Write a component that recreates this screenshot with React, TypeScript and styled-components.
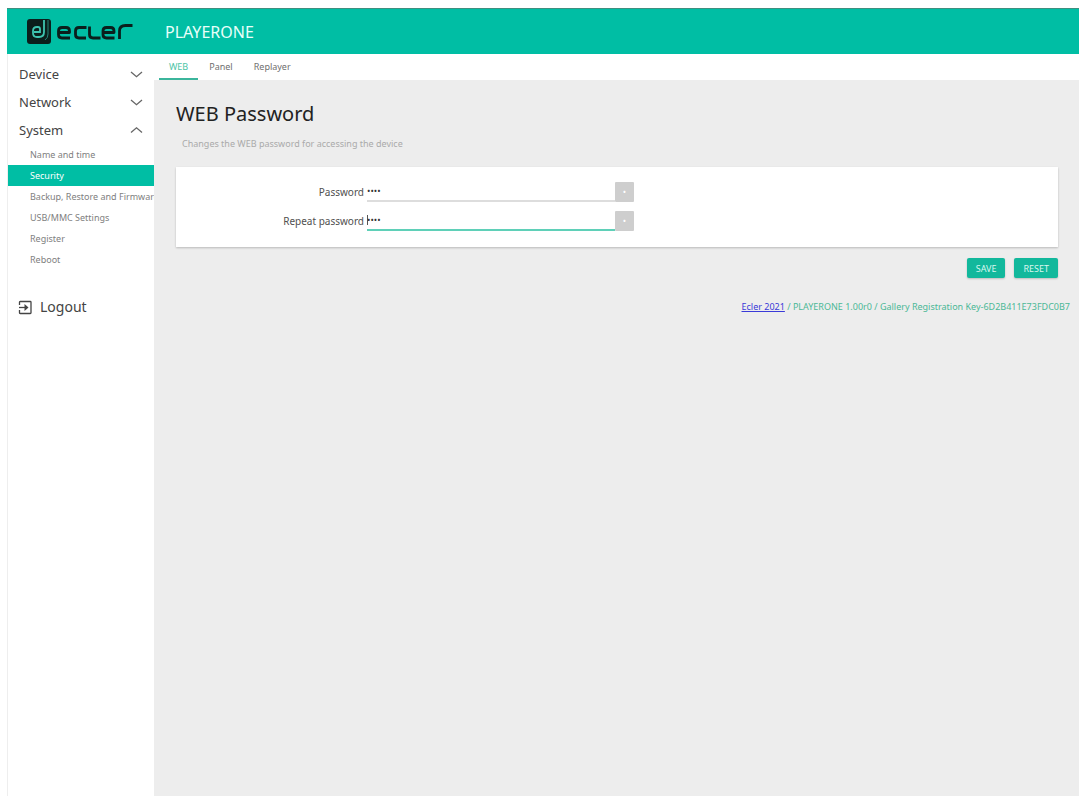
import React, { useState } from "react";
import styled, { createGlobalStyle } from "styled-components";

const teal = "#00bea4";
const ink = "#0b1f1c";

const GlobalStyle = createGlobalStyle`
  * { box-sizing: border-box; }
  body { margin: 0; background: #fff; font-family: "Noto Sans", "Open Sans", sans-serif; color: #333; }
  button, input { font-family: inherit; }
`;

const Page = styled.div`
  display: flex;
  flex-direction: column;
  min-height: 100vh;
  padding: 8px 2px 0 7px;
`;

const Header = styled.header`
  display: flex;
  align-items: center;
  height: 46px;
  padding-left: 20px;
  background: ${teal};
  border-top: 1px solid #3f8f80;
`;

const LogoLink = styled.a`
  display: flex;
  width: 138px;
`;

const Product = styled.span`
  color: #e8fffa;
  font-size: 16px;
  line-height: 24px;
`;

const Body = styled.div`
  display: flex;
  flex: 1;
`;

const Sidebar = styled.nav`
  display: flex;
  flex-direction: column;
  flex: none;
  width: 147px;
  padding-top: 6px;
  border-left: 1px solid #eee;
  overflow: hidden;
`;

const GroupButton = styled.button`
  display: flex;
  align-items: center;
  justify-content: space-between;
  height: 28px;
  padding: 0 11px;
  border: 0;
  background: none;
  color: #444;
  font-size: 13px;
  line-height: 20px;
`;

const SubList = styled.ul`
  margin: 0;
  padding: 0;
  list-style: none;
`;

const SubLink = styled.a<{ $active?: boolean }>`
  display: block;
  padding-left: 22px;
  background: ${(p) => (p.$active ? teal : "transparent")};
  color: ${(p) => (p.$active ? "#fff" : "#808080")};
  font-size: 9px;
  line-height: 21px;
  white-space: nowrap;
  text-decoration: none;
`;

const Logout = styled.a`
  display: flex;
  align-items: center;
  gap: 7px;
  margin-top: 27px;
  padding-left: 10px;
  color: #444;
  font-size: 14px;
  line-height: 20px;
  text-decoration: none;
`;

const Main = styled.main`
  flex: 1;
  min-width: 0;
  background: #ededed;
`;

const Tabs = styled.div`
  display: flex;
  gap: 1px;
  height: 26px;
  padding-left: 5px;
  background: #fff;
`;

const Tab = styled.button<{ $active?: boolean }>`
  padding: 2px 10px 0;
  border: 0;
  border-bottom: 2px solid ${(p) => (p.$active ? "#3bb59c" : "transparent")};
  background: none;
  color: ${(p) => (p.$active ? "#4cc4a6" : "#707070")};
  font-size: 9px;
  line-height: 20px;
`;

const Content = styled.div`
  padding: 18px 21px 0 22px;
`;

const Title = styled.h1`
  margin: 0;
  color: #222;
  font-size: 20px;
  font-weight: 400;
  line-height: 32px;
`;

const Hint = styled.p`
  margin: 0;
  padding: 4px 6px 13px;
  color: #aaa;
  font-size: 9px;
  line-height: 20px;
`;

const Card = styled.section`
  display: flex;
  flex-direction: column;
  gap: 8px;
  padding: 14px 0 16px;
  background: #fff;
  box-shadow: 0 1px 2px rgba(0, 0, 0, 0.22);
`;

const Field = styled.div`
  display: flex;
  align-items: center;
  height: 21px;
`;

const Label = styled.label`
  width: 188px;
  color: #505050;
  font-size: 10px;
  text-align: right;
`;

const Input = styled.input<{ $focused?: boolean }>`
  width: 248px;
  height: 21px;
  margin-left: 3px;
  padding: 0;
  border: 0;
  border-bottom: 2px solid ${(p) => (p.$focused ? "#5fd0b8" : "#ddd")};
  outline: 0;
  background: ${(p) => (p.$focused ? "linear-gradient(#555, #555) 0 5px / 1px 10px no-repeat" : "none")};
  color: #333;
  font-size: 9px;
`;

const Reveal = styled.button`
  width: 19px;
  height: 20px;
  padding: 0;
  border: 0;
  border-radius: 1px;
  background: #cecece;
  color: #fff;
  font-size: 9px;
  line-height: 20px;
`;

const Actions = styled.div`
  display: flex;
  justify-content: flex-end;
  gap: 9px;
  padding-top: 11px;
`;

const Action = styled.button`
  height: 20px;
  padding: 0 9px;
  border: 0;
  border-radius: 2px;
  background: #12b89c;
  box-shadow: 0 1px 2px rgba(0, 0, 0, 0.2);
  color: #d8f7ef;
  font-size: 9px;
`;

const Footer = styled.footer`
  padding: 20px 9px 0 0;
  color: #4bb896;
  font-size: 9px;
  line-height: 18px;
  text-align: right;

  a { color: #3a3ad8; }
`;

const Logo = () => (
  <svg width="107" height="25" viewBox="0 0 107 25" fill="none" stroke={ink} role="img" aria-label="ecler">
    <rect x="0" y="0" width="24" height="25" rx="3" fill={ink} stroke="none" />
    <path d="M7 13H13V10Q13 8 11 8H10Q6 8 6 12V14Q6 18 10 18H12Q17 18 17 13V1" stroke="#3ec4b0" strokeWidth="1.800" />
    <path d="M21 1V15Q21 19 18 21" stroke="#2a9d8c" strokeWidth="0.800" />
    <g strokeWidth="2.800" strokeLinejoin="round">
      <path d="M32 13.500H42.500V12Q42.500 8.500 39 8.500H35Q31.500 8.500 31.500 12V15.500Q31.500 19 35 19H43" />
      <path d="M59.500 8.500H52Q48.500 8.500 48.500 12V15.500Q48.500 19 52 19H59" />
      <path d="M62.500 7.500V15.500Q62.500 19 66 19H73.500" />
      <path d="M76.500 13.500H87V12Q87 8.500 83.500 8.500H79.500Q76 8.500 76 12V15.500Q76 19 79.500 19H87.500" />
      <path d="M92.500 20V12Q92.500 6.500 98.500 6.500H105.500" />
    </g>
  </svg>
);

const Chevron = ({ up }: { up?: boolean }) => (
  <svg width="13" height="8" viewBox="0 0 13 8" fill="none" stroke="#666" strokeWidth="1.300" aria-hidden="true">
    <path d={up ? "M1 6.500L6.500 1.800L12 6.500" : "M1 2L6.500 6.700L12 2"} />
  </svg>
);

const LogoutIcon = () => (
  <svg width="15" height="15" viewBox="0 0 15 15" fill="none" stroke="#444" strokeWidth="1.300" aria-hidden="true">
    <path d="M1.500 5V2.200Q1.500 1.500 2.200 1.500H12.300Q13 1.500 13 2.200V12.800Q13 13.500 12.300 13.500H2.200Q1.500 13.500 1.500 12.800V10" />
    <path d="M1 7.500H8" />
    <path d="M6.500 4L10.500 7.500L6.500 11Z" fill="#444" stroke="none" />
  </svg>
);

const pages = ["Name and time", "Security", "Backup, Restore and Firmware", "USB/MMC Settings", "Register", "Reboot"];

export default function App() {
  const [password, setPassword] = useState("1234");
  const [repeat, setRepeat] = useState("1234");

  return (
    <>
      <GlobalStyle />
      <Page>
        <Header>
          <LogoLink href="#home"><Logo /></LogoLink>
          <Product>PLAYERONE</Product>
        </Header>
        <Body>
          <Sidebar>
            <GroupButton>Device<Chevron /></GroupButton>
            <GroupButton>Network<Chevron /></GroupButton>
            <GroupButton>System<Chevron up /></GroupButton>
            <SubList>
              {pages.map((p) => (
                <li key={p}><SubLink href="#page" $active={p === "Security"}>{p}</SubLink></li>
              ))}
            </SubList>
            <Logout href="#logout"><LogoutIcon />Logout</Logout>
          </Sidebar>
          <Main>
            <Tabs>
              <Tab $active>WEB</Tab>
              <Tab>Panel</Tab>
              <Tab>Replayer</Tab>
            </Tabs>
            <Content>
              <Title>WEB Password</Title>
              <Hint>Changes the WEB password for accessing the device</Hint>
              <Card>
                <Field>
                  <Label htmlFor="password">Password</Label>
                  <Input id="password" type="password" value={password} onChange={(e) => setPassword(e.target.value)} />
                  <Reveal aria-label="Show password">•</Reveal>
                </Field>
                <Field>
                  <Label htmlFor="repeat">Repeat password</Label>
                  <Input id="repeat" type="password" $focused value={repeat} onChange={(e) => setRepeat(e.target.value)} />
                  <Reveal aria-label="Show repeated password">•</Reveal>
                </Field>
              </Card>
              <Actions>
                <Action>SAVE</Action>
                <Action>RESET</Action>
              </Actions>
            </Content>
            <Footer><a href="#ecler">Ecler 2021</a> / PLAYERONE 1.00r0 / Gallery Registration Key-6D2B411E73FDC0B7</Footer>
          </Main>
        </Body>
      </Page>
    </>
  );
}
